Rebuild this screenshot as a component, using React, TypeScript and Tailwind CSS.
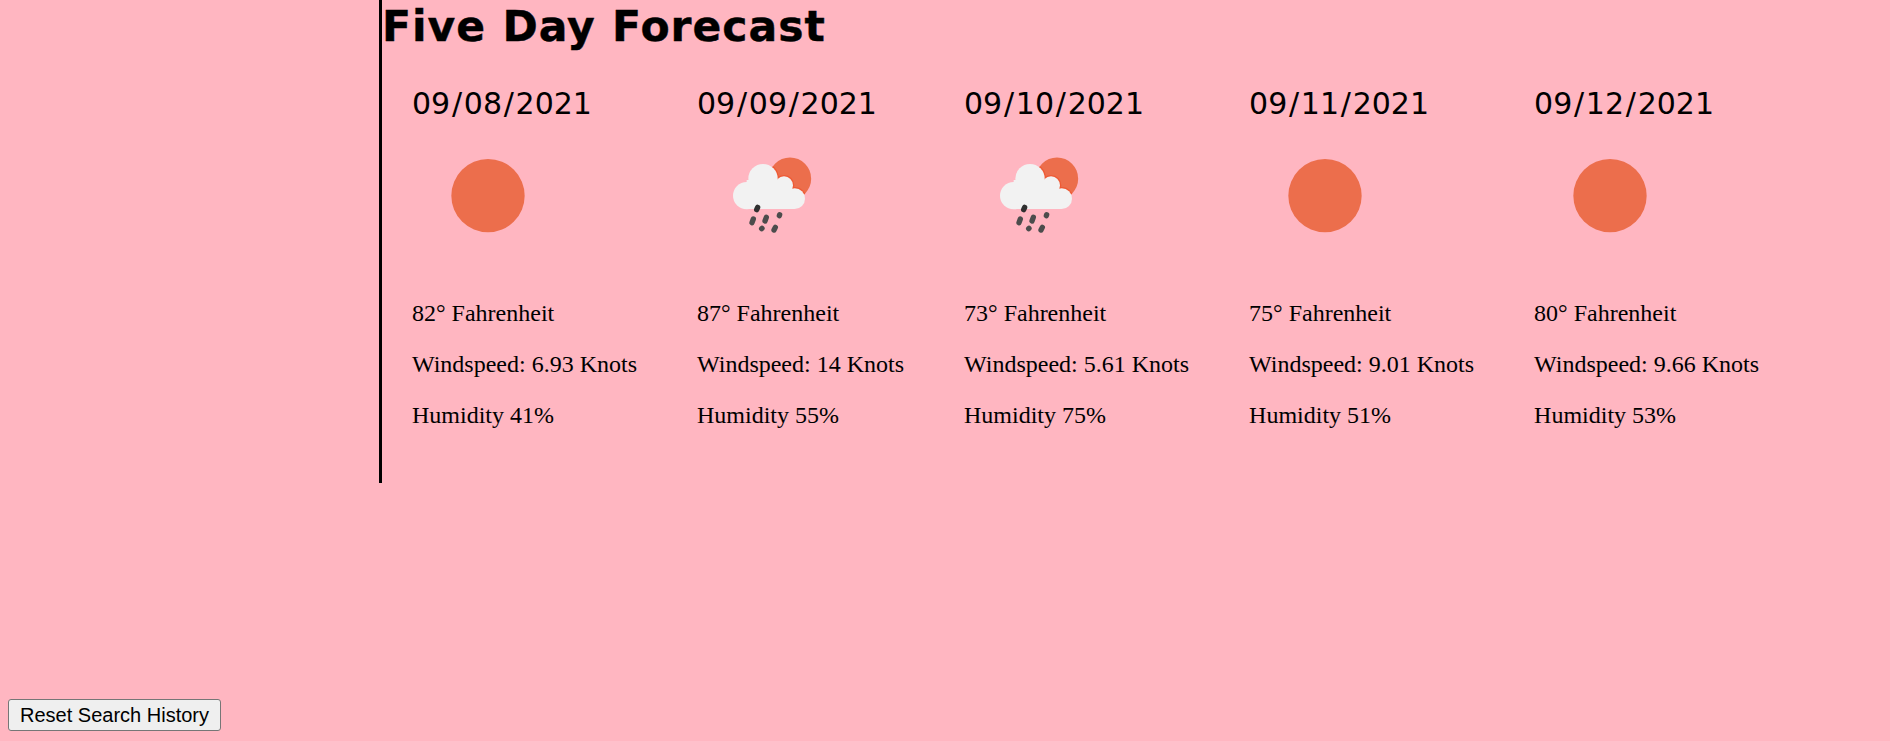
import React from "react";

type Weather = "clear" | "rain";

interface Day {
  date: string;
  weather: Weather;
  temp: number;
  wind: string;
  humidity: number;
}

const days: Day[] = [
  { date: "09/08/2021", weather: "clear", temp: 82, wind: "6.93", humidity: 41 },
  { date: "09/09/2021", weather: "rain", temp: 87, wind: "14", humidity: 55 },
  { date: "09/10/2021", weather: "rain", temp: 73, wind: "5.61", humidity: 75 },
  { date: "09/11/2021", weather: "clear", temp: 75, wind: "9.01", humidity: 51 },
  { date: "09/12/2021", weather: "clear", temp: 80, wind: "9.66", humidity: 53 },
];

function SunIcon() {
  return (
    <svg className="block size-[150px]" viewBox="0 0 450 450">
      <circle cx="228" cy="227" r="110" fill="#ec6e4c" />
    </svg>
  );
}

function RainIcon() {
  return (
    <svg className="block size-[150px]" viewBox="-39 -60 450 450">
      <circle cx="240" cy="116" r="63.5" fill="#ec6e4c" />
      <clipPath id="sun-disc">
        <circle cx="240" cy="116" r="63.5" />
      </clipPath>
      <g fill="#ee5a35" clipPath="url(#sun-disc)">
        <circle cx="159" cy="116" r="48" />
        <circle cx="222" cy="136" r="31" />
        <circle cx="254" cy="176" r="35" />
      </g>
      <g fill="#f2f2f2">
        <circle cx="110" cy="167" r="41" />
        <circle cx="159" cy="116" r="44" />
        <circle cx="222" cy="136" r="27" />
        <circle cx="254" cy="176" r="31" />
        <path d="M110 120h110l34 40v47H110z" />
      </g>
      <g stroke="#4c4c4c" strokeWidth="16" strokeLinecap="round">
        <path d="M143 202l-3 7" stroke="#303030" />
        <path d="M130 237l-4 11" />
        <path d="M169 232l-4 11" />
        <path d="M209 224l-1 3" />
        <path d="M156 265l-1 1" />
        <path d="M196 262l-4 8" />
      </g>
    </svg>
  );
}

function DateHeading({ date }: { date: string }) {
  const [month, day, year] = date.split("/");
  const slash = <span className="px-[1.75px]">/</span>;
  return (
    <h3 className="font-['DejaVu_Sans',sans-serif] text-[30px] leading-9">
      {month}
      {slash}
      {day}
      {slash}
      {year}
    </h3>
  );
}

function DayCard({ day }: { day: Day }) {
  return (
    <article className="px-[30px]">
      <DateHeading date={day.date} />
      <div className="-mt-0.5">{day.weather === "clear" ? <SunIcon /> : <RainIcon />}</div>
      <div className="mt-[30px] flex flex-col gap-6 text-[24px] leading-[27px]">
        <p>{day.temp}° Fahrenheit</p>
        <p>Windspeed: {day.wind} Knots</p>
        <p>Humidity {day.humidity}%</p>
      </div>
    </article>
  );
}

export default function App() {
  return (
    <main className="flex h-[741px] flex-col items-start justify-between overflow-hidden bg-[#ffb6c1] pb-[10px] font-['Liberation_Serif',serif] text-black">
      <section className="ml-[379px] h-[483px] border-l-[3px] border-black">
        <h1 className="h-[86px] whitespace-nowrap font-['DejaVu_Sans',sans-serif] text-[42.5px] leading-[53px] font-bold tracking-[1px] [word-spacing:0.5px] [-webkit-text-stroke:0.4px_black] [stroke-linejoin:round]">
          Five Day Forecast
        </h1>
        <div className="flex">
          {days.map((day) => (
            <DayCard key={day.date} day={day} />
          ))}
        </div>
      </section>
      <button className="ml-2 h-8 w-[213px] rounded-[3px] border border-[#767676] bg-[#efefef] font-['Liberation_Sans',sans-serif] text-[20px] leading-6 whitespace-nowrap">
        Reset Search History
      </button>
    </main>
  );
}
